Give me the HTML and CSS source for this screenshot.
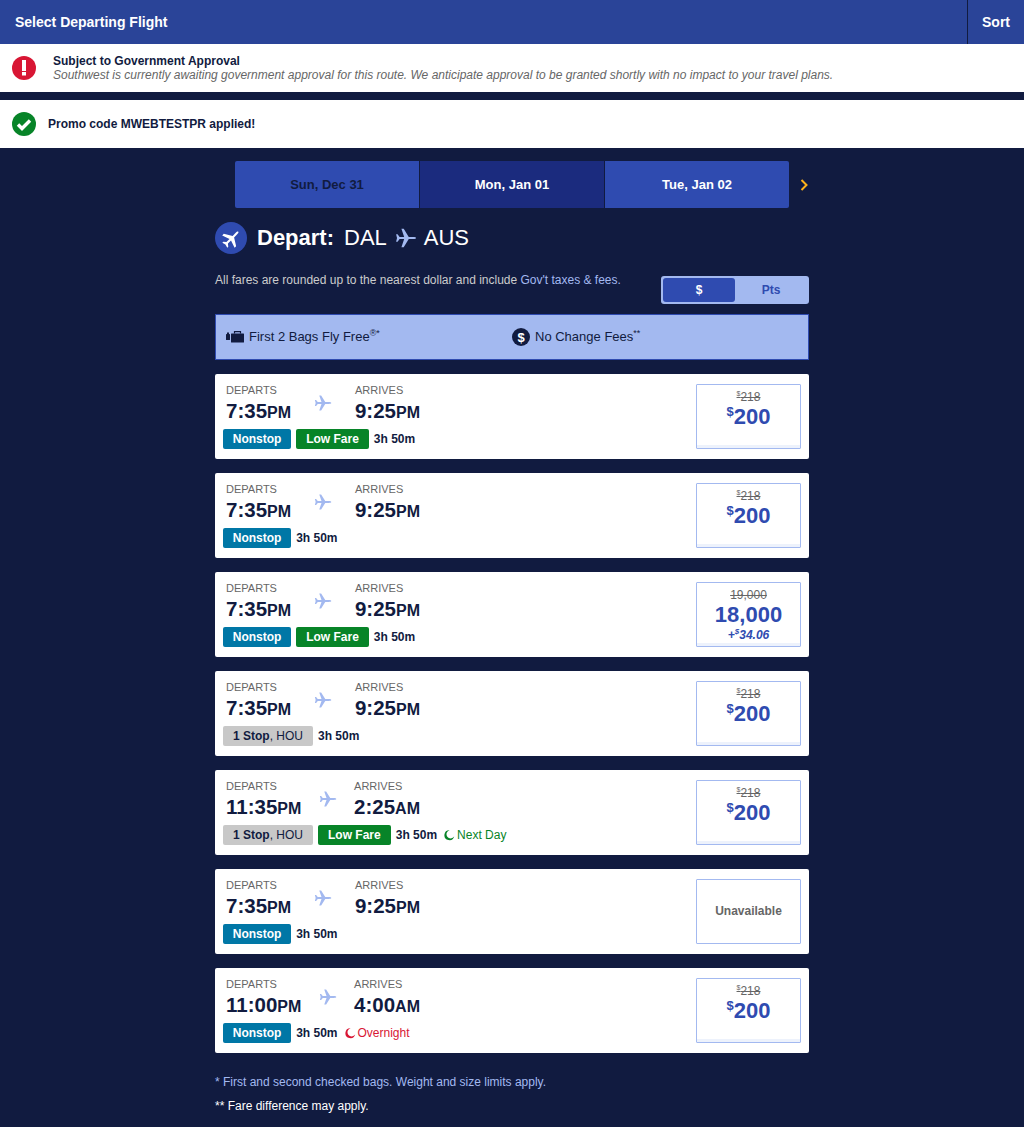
FILE: index.html
```html
<!DOCTYPE html>
<html lang="en">
<head>
    <meta charset="UTF-8">
    <meta name="viewport" content="width=device-width, initial-scale=1.0">
    <title>Select Departing Flight</title>
    <link rel="stylesheet" href="styles.css">
</head>
<body>
<svg class="defs" width="0" height="0">
    <symbol id="plane" viewBox="0 0 24 24">
        <path d="M23 12c0 .8-1.5 1.2-3 1.2h-5L9.5 22H7l3-8.8H5L2.8 16H1.2l1-4-1-4h1.6L5 10.8h5L7 2h2.5L15 10.8h5c1.5 0 3 .4 3 1.2z" fill="currentColor"/>
    </symbol>
    <symbol id="moon" viewBox="0 0 12 12">
        <path d="M6.6 1.2A5 5 0 1 0 11.2 7.6A4.2 4.2 0 1 1 6.6 1.2z" fill="currentColor"/>
    </symbol>
</svg>

<header class="topbar">
    <div class="topbar-title">Select Departing Flight</div>
    <div class="topbar-sort">Sort</div>
</header>

<div class="alert alert-gov">
    <svg class="alert-icon" viewBox="0 0 24 24">
        <circle cx="12" cy="12" r="12" fill="#d81634"/>
        <rect x="10" y="4" width="4" height="11" fill="#fff"/>
        <rect x="10" y="16" width="4" height="3.5" fill="#fff"/>
    </svg>
    <div>
        <div class="alert-title">Subject to Government Approval</div>
        <div class="alert-text">Southwest is currently awaiting government approval for this route. We anticipate approval to be granted shortly with no impact to your travel plans.</div>
    </div>
</div>
<div class="alert alert-promo">
    <svg class="alert-icon" viewBox="0 0 24 24">
        <circle cx="12" cy="12" r="12" fill="#078428"/>
        <path d="M6 12.5l4 4 8-8" fill="none" stroke="#fff" stroke-width="3.4"/>
    </svg>
    <div class="alert-title">Promo code MWEBTESTPR applied!</div>
</div>

<main class="content">
    <nav class="dates">
        <div class="date-tabs">
            <div class="date-tab date-off">Sun, Dec 31</div>
            <div class="date-tab date-active">Mon, Jan 01</div>
            <div class="date-tab">Tue, Jan 02</div>
        </div>
        <svg class="date-next" viewBox="0 0 8 12"><path d="M1.5 1l5 5-5 5" fill="none" stroke="#ffb31a" stroke-width="2"/></svg>
    </nav>

    <h1 class="depart">
        <span class="depart-badge"><svg class="depart-badge-icon" viewBox="0 0 24 24"><use href="#plane"/></svg></span>
        <b>Depart:</b>
        <span class="depart-code">DAL</span>
        <svg class="depart-plane" viewBox="0 0 24 24"><use href="#plane"/></svg>
        <span class="depart-code">AUS</span>
    </h1>

    <div class="fare-row">
        <p class="fare-note">All fares are rounded up to the nearest dollar and include <a href="#">Gov't taxes &amp; fees.</a></p>
        <div class="toggle">
            <div class="toggle-item toggle-on">$</div>
            <div class="toggle-item">Pts</div>
        </div>
    </div>

    <div class="perks">
        <div class="perk">
            <svg class="perk-bag" viewBox="0 0 18 12">
                <rect x="0" y="3" width="4" height="6" rx="0.5" fill="#111b40"/>
                <rect x="1" y="1.5" width="2" height="1.5" fill="#111b40"/>
                <rect x="5" y="2.5" width="13" height="9" rx="0.5" fill="#111b40"/>
                <path d="M8.5 2.5V0.7h6v1.8" fill="none" stroke="#111b40" stroke-width="1.2"/>
            </svg>
            <span>First 2 Bags Fly Free<sup>®*</sup></span>
        </div>
        <div class="perk">
            <svg class="perk-dollar" viewBox="0 0 18 18">
                <circle cx="9" cy="9" r="9" fill="#111b40"/>
                <text x="9" y="13.5" text-anchor="middle" class="perk-dollar-text">$</text>
            </svg>
            <span>No Change Fees<sup>**</sup></span>
        </div>
    </div>

    <section class="flights">
        <article class="flight">
            <div class="flight-info">
                <div class="times">
                    <div><div class="time-label">DEPARTS</div><div class="time">7:35<small>PM</small></div></div>
                    <svg class="time-plane" viewBox="0 0 24 24"><use href="#plane"/></svg>
                    <div><div class="time-label">ARRIVES</div><div class="time">9:25<small>PM</small></div></div>
                </div>
                <div class="tags">
                    <span class="tag tag-nonstop">Nonstop</span>
                    <span class="tag tag-low">Low Fare</span>
                    <span class="duration">3h 50m</span>
                </div>
            </div>
            <div class="price"><div class="price-old"><sup>$</sup>218</div><div class="price-now"><sup>$</sup>200</div></div>
        </article>

        <article class="flight">
            <div class="flight-info">
                <div class="times">
                    <div><div class="time-label">DEPARTS</div><div class="time">7:35<small>PM</small></div></div>
                    <svg class="time-plane" viewBox="0 0 24 24"><use href="#plane"/></svg>
                    <div><div class="time-label">ARRIVES</div><div class="time">9:25<small>PM</small></div></div>
                </div>
                <div class="tags">
                    <span class="tag tag-nonstop">Nonstop</span>
                    <span class="duration">3h 50m</span>
                </div>
            </div>
            <div class="price"><div class="price-old"><sup>$</sup>218</div><div class="price-now"><sup>$</sup>200</div></div>
        </article>

        <article class="flight">
            <div class="flight-info">
                <div class="times">
                    <div><div class="time-label">DEPARTS</div><div class="time">7:35<small>PM</small></div></div>
                    <svg class="time-plane" viewBox="0 0 24 24"><use href="#plane"/></svg>
                    <div><div class="time-label">ARRIVES</div><div class="time">9:25<small>PM</small></div></div>
                </div>
                <div class="tags">
                    <span class="tag tag-nonstop">Nonstop</span>
                    <span class="tag tag-low">Low Fare</span>
                    <span class="duration">3h 50m</span>
                </div>
            </div>
            <div class="price"><div class="price-old">19,000</div><div class="price-now">18,000</div><div class="price-tax">+<sup>$</sup>34.06</div></div>
        </article>

        <article class="flight">
            <div class="flight-info">
                <div class="times">
                    <div><div class="time-label">DEPARTS</div><div class="time">7:35<small>PM</small></div></div>
                    <svg class="time-plane" viewBox="0 0 24 24"><use href="#plane"/></svg>
                    <div><div class="time-label">ARRIVES</div><div class="time">9:25<small>PM</small></div></div>
                </div>
                <div class="tags">
                    <span class="tag tag-stop"><b>1 Stop</b>, HOU</span>
                    <span class="duration">3h 50m</span>
                </div>
            </div>
            <div class="price"><div class="price-old"><sup>$</sup>218</div><div class="price-now"><sup>$</sup>200</div></div>
        </article>

        <article class="flight">
            <div class="flight-info">
                <div class="times">
                    <div><div class="time-label">DEPARTS</div><div class="time">11:35<small>PM</small></div></div>
                    <svg class="time-plane" viewBox="0 0 24 24"><use href="#plane"/></svg>
                    <div><div class="time-label">ARRIVES</div><div class="time">2:25<small>AM</small></div></div>
                </div>
                <div class="tags">
                    <span class="tag tag-stop"><b>1 Stop</b>, HOU</span>
                    <span class="tag tag-low">Low Fare</span>
                    <span class="duration">3h 50m</span>
                    <span class="when when-next"><svg class="when-icon" viewBox="0 0 12 12"><use href="#moon"/></svg>Next Day</span>
                </div>
            </div>
            <div class="price"><div class="price-old"><sup>$</sup>218</div><div class="price-now"><sup>$</sup>200</div></div>
        </article>

        <article class="flight">
            <div class="flight-info">
                <div class="times">
                    <div><div class="time-label">DEPARTS</div><div class="time">7:35<small>PM</small></div></div>
                    <svg class="time-plane" viewBox="0 0 24 24"><use href="#plane"/></svg>
                    <div><div class="time-label">ARRIVES</div><div class="time">9:25<small>PM</small></div></div>
                </div>
                <div class="tags">
                    <span class="tag tag-nonstop">Nonstop</span>
                    <span class="duration">3h 50m</span>
                </div>
            </div>
            <div class="price price-none">Unavailable</div>
        </article>

        <article class="flight">
            <div class="flight-info">
                <div class="times">
                    <div><div class="time-label">DEPARTS</div><div class="time">11:00<small>PM</small></div></div>
                    <svg class="time-plane" viewBox="0 0 24 24"><use href="#plane"/></svg>
                    <div><div class="time-label">ARRIVES</div><div class="time">4:00<small>AM</small></div></div>
                </div>
                <div class="tags">
                    <span class="tag tag-nonstop">Nonstop</span>
                    <span class="duration">3h 50m</span>
                    <span class="when when-night"><svg class="when-icon" viewBox="0 0 12 12"><use href="#moon"/></svg>Overnight</span>
                </div>
            </div>
            <div class="price"><div class="price-old"><sup>$</sup>218</div><div class="price-now"><sup>$</sup>200</div></div>
        </article>
    </section>

    <p class="foot foot-bags">* First and second checked bags. Weight and size limits apply.</p>
    <p class="foot">** Fare difference may apply.</p>
</main>
</body>
</html>
```

FILE: styles.css
```css
body {
    background-color: #111b40;
    color: #111b40;
    font-family: "Liberation Sans", Arial, sans-serif;
    font-size: 12px;
    margin: 0;
    padding: 0;
}
.defs {
    display: block;
    height: 0;
}
sup {
    line-height: 0;
}

.topbar {
    display: flex;
    height: 44px;
    background-color: #2a4498;
    color: #fff;
    font-size: 14px;
    font-weight: bold;
    line-height: 44px;
}
.topbar-title {
    flex: 1;
    padding-left: 15px;
}
.topbar-sort {
    box-sizing: border-box;
    width: 57px;
    padding-left: 14px;
    border-left: 1px solid #111b40;
}

.alert {
    display: flex;
    align-items: center;
    height: 48px;
    padding-left: 12px;
    background-color: #fff;
    line-height: 14px;
}
.alert-gov {
    margin-bottom: 8px;
}
.alert-gov .alert-icon {
    margin-right: 17px;
}
.alert-promo .alert-icon {
    margin-right: 12px;
}
.alert-icon {
    flex: none;
    width: 24px;
    height: 24px;
}
.alert-title {
    font-weight: bold;
}
.alert-text {
    color: #666;
    font-style: italic;
}

.content {
    width: 594px;
    margin: 0 auto;
    padding-top: 13px;
}

.dates {
    display: flex;
    align-items: center;
    margin-left: 20px;
}
.date-tabs {
    display: flex;
    gap: 1px;
    width: 554px;
    height: 47px;
    border-radius: 2px;
    overflow: hidden;
}
.date-tab {
    flex: 1;
    background-color: #2f4bb0;
    color: #fff;
    font-size: 13px;
    font-weight: bold;
    line-height: 47px;
    text-align: center;
}
.date-off {
    color: #111b40;
}
.date-active {
    background-color: #1b2b7e;
}
.date-next {
    width: 8px;
    height: 12px;
    margin-left: 11px;
}

.depart {
    display: flex;
    align-items: center;
    height: 32px;
    margin: 14px 0 0;
    color: #fff;
    font-size: 22px;
    font-weight: normal;
}
.depart-badge {
    display: flex;
    align-items: center;
    justify-content: center;
    width: 32px;
    height: 32px;
    margin-right: 10px;
    border-radius: 50%;
    background-color: #2f4bb0;
}
.depart-badge-icon {
    width: 21px;
    height: 21px;
    transform: rotate(-45deg);
}
.depart-code {
    margin-left: 10px;
}
.depart-plane {
    width: 22px;
    height: 22px;
    margin: 0 -3px 0 8px;
    color: #a3b9f0;
}

.fare-row {
    display: flex;
    justify-content: space-between;
    height: 41px;
    margin-top: 12px;
    padding-top: 7px;
}
.fare-note {
    margin: 0;
    color: #ccc;
    line-height: 14px;
}
.fare-note a {
    color: #a3b9f0;
    text-decoration: none;
}
.toggle {
    display: flex;
    box-sizing: border-box;
    width: 148px;
    height: 28px;
    margin-top: 3px;
    padding: 2px;
    border-radius: 3px;
    background-color: #a3b9f0;
    color: #2f4bb0;
    font-weight: bold;
    line-height: 24px;
    text-align: center;
}
.toggle-item {
    flex: 1;
}
.toggle-on {
    border-radius: 3px;
    background-color: #2f4bb0;
    color: #fff;
}

.perks {
    display: flex;
    box-sizing: border-box;
    height: 46px;
    padding: 0 0 1px 10px;
    border: 1px solid #2f4bb0;
    background-color: #a3b9f0;
    font-size: 13px;
}
.perk {
    display: flex;
    align-items: center;
    width: 286px;
}
.perk sup {
    font-size: 9px;
}
.perk-bag {
    width: 18px;
    height: 12px;
    margin-right: 5px;
}
.perk-dollar {
    width: 18px;
    height: 18px;
    margin-right: 5px;
}
.perk-dollar-text {
    fill: #fff;
    font-size: 13px;
    font-weight: bold;
}

.flights {
    display: flex;
    flex-direction: column;
    gap: 14px;
    margin-top: 14px;
}
.flight {
    display: flex;
    justify-content: space-between;
    box-sizing: border-box;
    height: 85px;
    padding: 10px 8px 0;
    border-radius: 2px;
    background-color: #fff;
}
.times {
    display: flex;
    justify-content: space-between;
    width: 194px;
    margin-left: 3px;
}
.time-label {
    color: #666;
    font-size: 11px;
    line-height: 13px;
}
.time {
    font-size: 20.5px;
    font-weight: bold;
    line-height: 26px;
    margin-top: 1px;
}
.time small {
    font-size: 16px;
    line-height: 0;
}
.time-plane {
    width: 18px;
    height: 18px;
    margin: 10px -1px 0;
    color: #a3b9f0;
}
.tags {
    display: flex;
    align-items: center;
    height: 20px;
    margin-top: 5px;
}
.tag {
    height: 20px;
    margin-right: 5px;
    padding: 0 10px;
    border-radius: 2px;
    color: #fff;
    font-weight: bold;
    line-height: 20px;
}
.tag-nonstop {
    padding: 0 9.75px;
    background-color: #0077a6;
}
.tag-low {
    background-color: #078428;
}
.tag-stop {
    background-color: #c8c8c8;
    color: #111b40;
    font-weight: normal;
}
.duration {
    font-weight: bold;
}
.when {
    display: flex;
    align-items: center;
    margin-left: 6px;
}
.when-icon {
    width: 12px;
    height: 12px;
    margin-right: 2px;
}
.when-next {
    color: #078428;
}
.when-night {
    color: #d81634;
}

.price {
    box-sizing: border-box;
    width: 105px;
    height: 65px;
    padding-top: 5px;
    border: 1px solid #a3b9f0;
    border-radius: 1px;
    box-shadow: inset 0 -3px 0 #edf2fc;
    text-align: center;
}
.price-old {
    color: #666;
    line-height: 14px;
    text-decoration: line-through;
}
.price-old sup {
    font-size: 7px;
}
.price-now {
    color: #2f4bb0;
    font-size: 22px;
    font-weight: bold;
    line-height: 26px;
}
.price-now sup {
    font-size: 13px;
    vertical-align: 8px;
}
.price-tax {
    color: #2f4bb0;
    font-weight: bold;
    font-style: italic;
    line-height: 14px;
}
.price-tax sup {
    font-size: 8px;
}
.price-none {
    padding-top: 0;
    box-shadow: none;
    color: #666;
    font-weight: bold;
    line-height: 63px;
}

.foot {
    margin: 8px 0 0;
    color: #fff;
    line-height: 16px;
}
.foot-bags {
    margin-top: 21px;
    color: #a3b9f0;
}
```
